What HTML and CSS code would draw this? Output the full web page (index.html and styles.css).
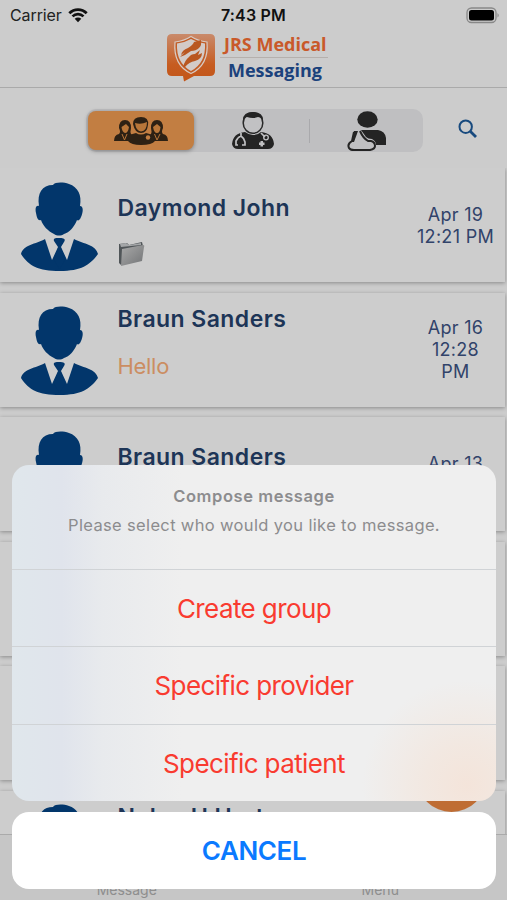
FILE: index.html
```
<!DOCTYPE html>
<html lang="en">

<head>
    <meta charset="UTF-8">
    <meta name="viewport" content="width=device-width, initial-scale=1.0">
    <title>JRS Medical Messaging</title>
    <link rel="stylesheet" href="styles.css">
</head>

<body>
    <!-- shared icons -->
    <svg class="defs" width="0" height="0">
        <symbol id="avatar" viewBox="0 0 77 89">
            <path d="M18 24C16 11 21 3 32 3C34 0 42 0 48 2C57 5 61 13 59 24C63 24 62 31 60 35C59 38 57 39 56 38C54 44 48 51 43 52C40 54 36 54 33 52C27 49 22 44 20 38C17 39 16 36 15 31C14 26 15 23 18 24Z"/>
            <path d="M24 57L31 78L37 65L33 59C32 56 35 56 38 56C43 56 45 57 43 60L40 65L46 78L53 57C63 62 75 63 77 72C69 83 60 89 39 89C17 89 8 84 0 72C2 63 15 62 24 57Z"/>
            <path d="M37 66L40 66L44 78L38.500 87L33 78Z"/>
        </symbol>
    </svg>

    <div class="phone">
        <div class="status">
            <div class="carrier">Carrier
                <svg width="20" height="15" viewBox="0 0 20 15">
                    <path d="M1.300 5.300C6.200 .3 13.800 .3 18.700 5.300M4.500 8.400C7.600 5.400 12.400 5.400 15.500 8.400" fill="none" stroke="#111" stroke-width="2.700"/>
                    <path d="M6.700 10.800C8.600 9.200 11.400 9.200 13.300 10.800L10 14.300Z" fill="#111"/>
                </svg>
            </div>
            <div class="time">7:43 PM</div>
            <div class="battery">
                <svg width="34" height="17" viewBox="0 0 34 17">
                    <rect x="1" y="1" width="29" height="14.500" rx="4.500" fill="none" stroke="#888" stroke-width="1.300"/>
                    <rect x="3" y="3" width="25" height="10.500" rx="2.500" fill="#000"/>
                    <path d="M31.500 6Q34 8.300 31.500 10.500Z" fill="#888"/>
                </svg>
            </div>
        </div>

        <header class="brand">
            <svg width="48" height="49" viewBox="0 0 48 49">
                <defs>
                    <linearGradient id="logo" x1="0" y1="0" x2="0" y2="1">
                        <stop offset="0" stop-color="#c98a6b"/>
                        <stop offset=".65" stop-color="#c65c20"/>
                        <stop offset="1" stop-color="#c25519"/>
                    </linearGradient>
                </defs>
                <path d="M5 1H43Q48 1 48 6V38Q48 43 43 43H27L17 48.500L16 43H5Q0 43 0 38V6Q0 1 5 1Z" fill="url(#logo)"/>
                <path d="M8 9Q17 8 24 3.500Q31 8 40 9Q42 32 24 40.500Q6 32 8 9Z" fill="#c25d26" stroke="#d8cbc4" stroke-width="1.200"/>
                <path d="M10 10.500Q18 9.500 24 6Q31 10 38 10.500Q39 30 24 38Q9 30 10 10.500Z" fill="#d3cbc7"/>
                <path d="M14 22Q15 17 21 15Q26 12 27 9L34 7Q35 12 32 15Q29 18 24 18L18 22L13 24L18 19ZM16 34Q18 27 22 24Q24 21 28 21L33 17L31 22L35 20Q35 26 28 28Q22 29 18 34Z" fill="#b95720"/>
            </svg>
            <div class="brand-text">
                <div class="brand-top">JRS Medical</div>
                <div class="brand-bottom">Messaging</div>
            </div>
        </header>

        <div class="toolbar">
            <div class="segments">
                <div class="segment active">
                    <svg width="56" height="30" viewBox="0 0 56 30">
                        <g fill="#2d2114">
                            <path d="M1 25Q1 19 6 18Q8 16 6 12Q6 4 12 4Q18 4 18 12Q17 16 18 18L22 20V25Z"/>
                            <path d="M55 25Q55 19 50 18Q48 16 50 12Q50 4 44 4Q38 4 38 12Q39 16 38 18L34 20V25Z"/>
                            <path d="M15 25Q15 18 23 17Q28 20 33 17Q41 18 42 25Q39 29 28 29Q18 29 15 25Z"/>
                            <path d="M20 8Q20 1 28 1Q36 1 35 9Q34 17 28 17Q22 17 20 8Z"/>
                        </g>
                        <path d="M22 7Q28 9 34 6Q34 15 28 15.500Q23 15 22 7ZM8.500 11L13 8L16 11Q15 17 12 17Q9 16 8.500 11ZM40 11L44 8L47.500 11Q47 17 44 17Q41 17 40 11Z" fill="#b87639"/>
                        <path d="M9 18L11.500 24L14 18M41.500 18L44 24L47 18" fill="none" stroke="#b87639"/>
                        <circle cx="35" cy="21.500" r="2.200" fill="#c27e42"/>
                    </svg>
                </div>
                <div class="segment">
                    <svg width="42" height="39" viewBox="0 0 42 39">
                        <path d="M13 21Q17 24 21 24Q26 24 29 21Q41 22 42 33Q41 38 36 38H6Q1 38 0 33Q1 22 13 21Z" fill="#242424"/>
                        <ellipse cx="21" cy="12" rx="9.800" ry="10.300" fill="#c1c1c3" stroke="#292929" stroke-width="1.500"/>
                        <path d="M11 9Q11 1 21 1Q31 1 31 9Q29 6 26 6Q21 8 15 6Q13 6 11 9Z" fill="#242424"/>
                        <path d="M9 22V25M6 34H4V30Q6 26 9 25Q12 27 13 31V34H10M29 22L33 26" fill="none" stroke="#c1c1c3" stroke-width="1.700"/>
                        <circle cx="34" cy="26.500" r="2.300" fill="none" stroke="#c1c1c3" stroke-width="1.300"/>
                        <path d="M28.500 30H31V31.500H32.500V34H31V35.500H28.500V34H27V31.500H28.500Z" fill="#c1c1c3"/>
                    </svg>
                </div>
                <span class="divider"></span>
                <div class="segment">
                    <svg width="40" height="40" viewBox="0 0 40 40">
                        <ellipse cx="20.500" cy="8.500" rx="10.200" ry="8.300" fill="#242424"/>
                        <path d="M14 19H31Q38 20 39 27V34H29Q29 30 25 28Q21 28 19 26Z" fill="#242424"/>
                        <path d="M7 21L5 30Q0 33 2 37Q3 39 7 39H23Q28 38 28 35Q28 31 24 30H21Q16 27 13 20" fill="none" stroke="#242424" stroke-width="2"/>
                        <path d="M7 20H11L7 31H5Z" fill="#242424"/>
                    </svg>
                </div>
            </div>
            <svg class="search" width="20" height="20" viewBox="0 0 20 20" fill="none" stroke="#184a7e" stroke-width="2">
                <circle cx="7.700" cy="7.700" r="6.200"/>
                <path d="M12.200 12.200L18 18" stroke-width="2.800"/>
            </svg>
        </div>

        <main class="list">
            <div class="card">
                <svg class="avatar"><use href="#avatar"/></svg>
                <div class="info">
                    <h2>Daymond John</h2>
                    <p>
                        <svg width="27" height="26" viewBox="0 0 27 26">
                            <defs>
                                <linearGradient id="folder" x1="0" y1="0" x2="1" y2="1">
                                    <stop offset="0" stop-color="#aaa"/>
                                    <stop offset="1" stop-color="#717375"/>
                                </linearGradient>
                            </defs>
                            <path d="M1 3L9 2L11 4L24 1L25 5L3 24L1 22Z" fill="#505558"/>
                            <path d="M2 3L8 2L11 4L23 2V4L3 6Z" fill="#a4a6a8"/>
                            <path d="M4 8L25 4Q27 4 26 6L24 20L3 25Z" fill="url(#folder)"/>
                        </svg>
                    </p>
                </div>
                <div class="date">Apr 19<br>12:21 PM</div>
            </div>
            <div class="card">
                <svg class="avatar"><use href="#avatar"/></svg>
                <div class="info up">
                    <h2>Braun Sanders</h2>
                    <p>Hello</p>
                </div>
                <div class="date">Apr 16<br>12:28<br>PM</div>
            </div>
            <div class="card">
                <svg class="avatar"><use href="#avatar"/></svg>
                <div class="info">
                    <h2>Braun Sanders</h2>
                </div>
                <div class="date">Apr 13<br>&nbsp;</div>
            </div>
            <div class="card"></div>
            <div class="card"></div>
            <div class="card">
                <svg class="avatar"><use href="#avatar"/></svg>
                <div class="info up">
                    <h2>Nolan H Hart</h2>
                </div>
            </div>
        </main>

        <nav class="tabs">
            <div>Message</div>
            <div>Menu</div>
        </nav>

        <div class="fab"></div>

        <div class="sheet">
            <div class="options">
                <div class="sheet-head">
                    <h3>Compose message</h3>
                    <p>Please select who would you like to message.</p>
                </div>
                <div class="option">Create group</div>
                <div class="option">Specific provider</div>
                <div class="option">Specific patient</div>
            </div>
            <div class="cancel">CANCEL</div>
        </div>
    </div>
</body>

</html>
```

FILE: styles.css
```
* {
    box-sizing: border-box;
}

body,
h2,
h3,
p {
    margin: 0;
}

body {
    background: #ccc;
    font-family: Inter, "Liberation Sans", sans-serif;
}

.defs {
    position: absolute;
}

.phone {
    position: relative;
    display: flex;
    flex-direction: column;
    width: 507px;
    height: 900px;
    overflow: hidden;
    background: #ccc;
}

/* status bar */
.status {
    display: grid;
    grid-template-columns: 1fr 1fr 1fr;
    align-items: center;
    height: 30px;
    padding: 0 7px 0 10px;
    font-size: 16px;
    color: #222;
}

.carrier {
    display: flex;
    align-items: center;
    gap: 6px;
    letter-spacing: -0.1px;
}

.time {
    padding-right: 3px;
    text-align: center;
    font-weight: 600;
    letter-spacing: 0.2px;
    color: #111;
}

.battery {
    display: flex;
    justify-content: flex-end;
}

/* logo */
.brand {
    display: flex;
    height: 58px;
    padding: 3px 0 0 167px;
    gap: 5px;
    border-bottom: 1px solid #aaa;
}

.brand-text {
    width: 108px;
    font-family: "Open Sans", "Noto Sans", sans-serif;
    font-size: 18px;
    font-weight: 700;
    line-height: 24px;
    white-space: nowrap;
}

.brand-top {
    height: 25px;
    padding-left: 4px;
    border-bottom: 1px solid #b5b0ad;
    line-height: 23px;
    color: #c9592a;
}

.brand-bottom {
    padding-left: 8px;
    color: #1b427c;
}

/* filter */
.toolbar {
    display: flex;
    align-items: center;
    height: 80px;
    padding: 5px 0 0 86px;
}

.segments {
    display: flex;
    align-items: center;
    width: 337px;
    height: 43px;
    padding: 2px;
    border-radius: 10px;
    background: #bfbfc1;
}

.segment {
    display: flex;
    flex: 1;
    align-items: center;
    justify-content: center;
    height: 39px;
    padding-left: 4px;
}

.segment.active {
    flex: 0 0 106px;
    padding-left: 0;
    border-radius: 8px;
    background: #c27e42;
    box-shadow: 0 1px 4px rgba(0, 0, 0, 0.35);
}

.divider {
    width: 1px;
    height: 24px;
    margin: 0 -2px 0 2px;
    background: #a9a9ac;
}

.search {
    margin-left: 34.500px;
    margin-top: -4px;
}

/* messages */
.list {
    display: flex;
    flex-direction: column;
    gap: 10.600px;
    height: 666px;
    overflow: hidden;
}

.card {
    display: flex;
    flex-shrink: 0;
    width: 505px;
    height: 114px;
    padding-left: 21px;
    background: #cdcdcd;
    box-shadow: 0 0.500px 4px rgba(0, 0, 0, 0.32);
}

.avatar {
    width: 77px;
    height: 89px;
    margin-top: 13.500px;
    fill: #02366b;
}

.info {
    flex: 1;
    padding: 25px 0 0 19.500px;
}

.info.up {
    padding-top: 11px;
}

.info h2 {
    font-size: 23px;
    font-weight: 600;
    line-height: 30px;
    letter-spacing: 0.430px;
    color: #1d3557;
}

.info p {
    margin-top: 18px;
    font-size: 22px;
    line-height: 28px;
    letter-spacing: -0.300px;
    color: #cb8d62;
}

.info svg {
    display: block;
}

.date {
    align-self: center;
    width: 99px;
    padding-top: 1px;
    text-align: center;
    font-size: 18px;
    line-height: 22px;
    letter-spacing: 0.300px;
    color: #31436a;
}

/* bottom tabs */
.tabs {
    display: grid;
    grid-template-columns: 1fr 1fr;
    flex: 1;
    padding-top: 46px;
    border-top: 1px solid #aaa;
    background: #c6c6c6;
    text-align: center;
    font-size: 14px;
    line-height: 18px;
    color: #8e8e8e;
}

.fab {
    position: absolute;
    left: 417px;
    top: 743px;
    width: 69px;
    height: 69px;
    border-radius: 50%;
    background: #bf6d34;
}

/* action sheet over the page */
.sheet {
    position: absolute;
    left: 12px;
    right: 11px;
    bottom: 11px;
    text-align: center;
}

.options {
    height: 336px;
    border-radius: 17px;
    background:
        radial-gradient(circle at 455px 320px, #f4e4da 0, rgba(243, 230, 221, 0.8) 40px, rgba(239, 239, 239, 0) 105px),
        linear-gradient(to right, #e0e7ec 0, #e0e4ec 50px, #e8eaed 90px, #efefef 170px);
}

.sheet-head {
    height: 104px;
    padding-top: 19px;
    font-size: 16.500px;
    color: #8c8c8e;
}

.sheet-head h3 {
    font-size: 16.500px;
    font-weight: 600;
    line-height: 24px;
    letter-spacing: 0.600px;
}

.sheet-head p {
    margin-top: 5px;
    line-height: 24px;
    letter-spacing: 0.350px;
}

.option {
    height: 77.400px;
    border-top: 1.500px solid #d0d3d6;
    font-size: 26px;
    line-height: 77px;
    letter-spacing: -0.600px;
    color: #f93b30;
}

.cancel {
    height: 77px;
    margin-top: 11px;
    border-radius: 17px;
    background: #fff;
    font-size: 26px;
    font-weight: 600;
    line-height: 77px;
    letter-spacing: -0.400px;
    color: #0b7aff;
}
```
